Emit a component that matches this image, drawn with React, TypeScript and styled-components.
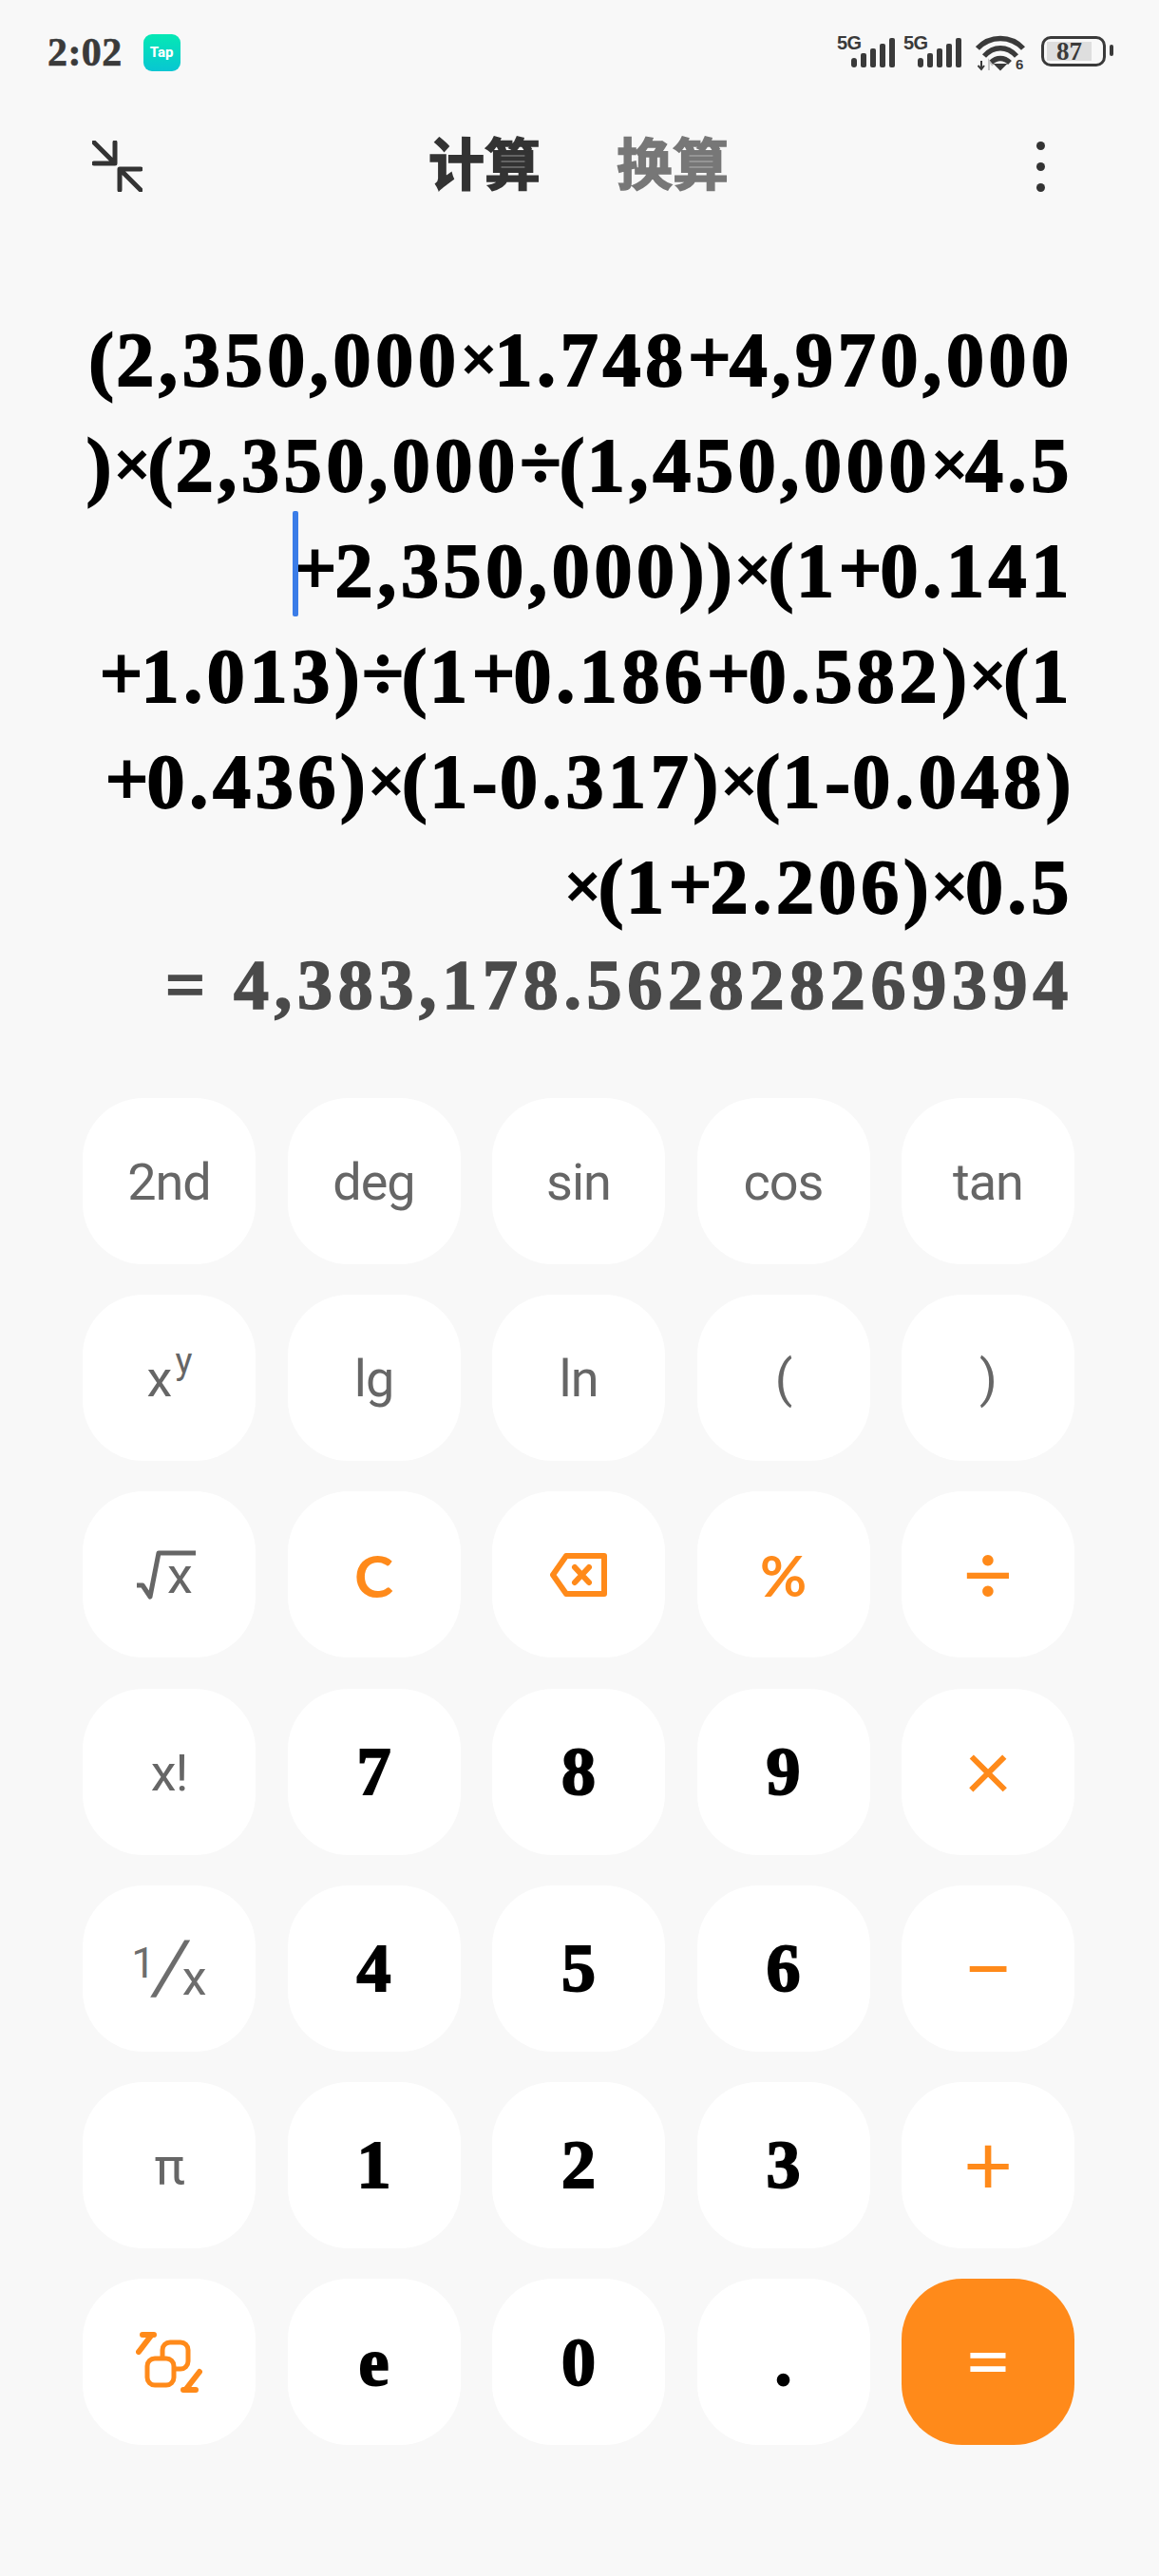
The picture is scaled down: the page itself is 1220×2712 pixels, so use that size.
import styled, { createGlobalStyle } from "styled-components";

const Global = createGlobalStyle`
    html, body {
        margin: 0;
        padding: 0;
        background: #f8f8f8;
    }
    * {
        box-sizing: border-box;
    }
`

const SERIF = `"Liberation Serif", "Noto Sans CJK SC", serif`;
const SANS = `Roboto, "Noto Sans", sans-serif`;
const ORANGE = "#ff8a1a";

const Page = styled.div`
    width: 1220px;
    height: 2712px;
    overflow: hidden;
    background: #f8f8f8;
`

const StatusBar = styled.div`
    height: 110px;
    padding: 36px 56px 0 50px;
    display: flex;
    align-items: flex-start;
`

const Time = styled.span`
    font: 700 42px/39px ${SERIF};
    color: #3a3a3a;
    letter-spacing: 0.4px;
    -webkit-text-stroke: 0.6px #3a3a3a;
`

const TapIcon = styled.div`
    width: 39px;
    height: 39px;
    margin-left: 22px;
    border-radius: 9px;
    background: linear-gradient(180deg, #05e8b4, #08c6d2);
    color: #fff;
    font: 800 15px/39px ${SANS};
    text-align: center;
`

const StatusIcons = styled.div`
    margin-left: auto;
    display: flex;
    align-items: flex-start;
`

const SignalGap = styled.span`
    width: 8px;
`

const SignalWrap = styled.div`
    position: relative;
    width: 62px;
    height: 36px;
`

const SignalLabel = styled.span`
    position: absolute;
    left: 0;
    top: 0;
    font: 700 20px/18px "Liberation Sans", sans-serif;
    letter-spacing: -0.5px;
    color: #3a3a3a;
`

const Battery = styled.div`
    width: 68px;
    height: 32px;
    margin: 2px 0 0 15px;
    padding: 3px;
    border: 3.5px solid #3a3a3a;
    border-radius: 10px;
    position: relative;

    &::after {
        content: "";
        position: absolute;
        right: -11px;
        top: 6px;
        width: 4px;
        height: 12px;
        border-radius: 2px;
        background: #3a3a3a;
    }
`

const BatteryFill = styled.div`
    width: 47px;
    height: 100%;
    background: #dedede;
    font: 700 27px/21px ${SERIF};
    color: #3a3a3a;
    padding-left: 10px;
    white-space: nowrap;
`

const Header = styled.div`
    height: 130px;
    padding: 0 120px 0 97px;
    display: flex;
    align-items: center;
`

const Tabs = styled.div`
    margin-left: 301px;
    display: flex;
    gap: 80px;
`

const Tab = styled.span<{ $active?: boolean }>`
    font: 700 59px/70px ${SERIF};
    color: ${(p) => (p.$active ? "#333" : "#777")};
    -webkit-text-stroke: 1.5px ${(p) => (p.$active ? "#333" : "#777")};
`

const Dots = styled.div`
    margin-left: auto;
    display: flex;
    flex-direction: column;
    gap: 13px;

    i {
        display: block;
        width: 9px;
        height: 9px;
        border-radius: 50%;
        background: #333;
    }
`

const Display = styled.div`
    margin-top: 84px;
    padding-right: 90px;
`

const Line = styled.div`
    height: 111px;
    display: flex;
    justify-content: flex-end;
    align-items: center;
    font: 700 80px/111px ${SERIF};
    letter-spacing: 4.7px;
    color: #000;
    -webkit-text-stroke: 1.8px #000;
    white-space: nowrap;
`

const OP_STYLES: Record<string, string> = {
    "×": "font-size: 68px; letter-spacing: -3px; vertical-align: 5px;",
    "+": "letter-spacing: -1.8px; vertical-align: 3px;",
    "÷": "letter-spacing: -2.2px; vertical-align: 3px;",
    "(": "letter-spacing: 2.5px;",
    ")": "letter-spacing: 2.5px;",
    "-": "letter-spacing: 2.5px;",
};

const Op = styled.span<{ $op: string }>`
    line-height: 1;
    ${(p) => OP_STYLES[p.$op]}
`

const Caret = styled.span`
    width: 6px;
    height: 111px;
    border-radius: 2px;
    background: #3b7de8;
    margin-right: -5px;
    transform: translateY(-8px);
`

const Result = styled.div`
    height: 90px;
    margin-top: 2px;
    text-align: right;
    font: 700 74px/90px ${SERIF};
    letter-spacing: 5.7px;
    color: #4a4a4a;
    -webkit-text-stroke: 1.6px #4a4a4a;
    white-space: nowrap;
`

const Keypad = styled.div`
    margin-top: 74px;
    padding-left: 87px;
    display: grid;
    grid-template-columns: repeat(5, 182px);
    grid-auto-rows: 175px;
    column-gap: 33.5px;
    row-gap: 32.2px;
`

const Key = styled.div<{ $primary?: boolean }>`
    border-radius: 64px;
    background: ${(p) => (p.$primary ? ORANGE : "#fff")};
    display: flex;
    align-items: center;
    justify-content: center;
`

const FnLabel = styled.span`
    font: 400 54px/1 ${SANS};
    letter-spacing: -1px;
    color: #666;
    margin-top: 3px;
`

const Sup = styled.sup`
    font-size: 38px;
    line-height: 0;
    margin-left: 4px;
    vertical-align: 24px;
`

const SqrtLabel = styled.span`
    display: flex;
    align-items: flex-end;
    font: 400 54px/1 ${SANS};
    color: #666;
    margin-left: -9px;

    span {
        margin: 0 0 -2px -30px;
    }
`

const Reciprocal = styled.span`
    font: 400 52px/1 ${SANS};
    color: #6d6d6d;
    display: flex;
    align-items: flex-end;

    b {
        font-weight: 400;
        font-size: 45px;
        margin-bottom: 22px;
    }
    em {
        display: inline-block;
        font-style: normal;
        font-size: 78px;
        font-weight: 400;
        margin: 0 -4px 0 0;
        transform: skewX(-12deg);
    }
    span {
        margin-bottom: 2px;
    }
`

const Digit = styled.span`
    font: 700 72px/1 ${SERIF};
    color: #000;
    -webkit-text-stroke: 2px #000;
`

const OpLabel = styled.span<{ $size?: number; $weight?: number; $white?: boolean; $lift?: number }>`
    font: ${(p) => p.$weight || 400} ${(p) => p.$size || 60}px/1 Lato, sans-serif;
    color: ${(p) => (p.$white ? "#fff" : ORANGE)};
    margin-bottom: ${(p) => p.$lift || 0}px;
`

function Signal() {
    return (
        <SignalWrap>
            <SignalLabel>5G</SignalLabel>
            <svg width="62" height="36" viewBox="0 0 62 36" fill="#3a3a3a">
                <rect x="15" y="25" width="6" height="10" rx="3" />
                <rect x="25" y="20" width="6" height="15" rx="2" />
                <rect x="35" y="15" width="6" height="20" rx="2" />
                <rect x="45" y="10" width="6" height="25" rx="2" />
                <rect x="55" y="4" width="6" height="31" rx="2" />
            </svg>
        </SignalWrap>
    )
}

function Wifi() {
    return (
        <svg width="54" height="40" viewBox="0 0 54 40" style={{ marginLeft: 14 }} fill="none" stroke="#3a3a3a" strokeWidth="5.5">
            <path d="M2 15 C15 1 37 1 50 15" />
            <path d="M9 23 C19 12 33 12 43 23" />
            <path d="M16 30 C22 24 30 24 36 30" />
            <path d="M21 32 L26 37 L31 32 Z" fill="#3a3a3a" strokeWidth="2" />
            <path d="M6 28 V37 M2.5 33 L6 37 L9 33" strokeWidth="2" />
            <path d="M14 38 V28 L18 33" strokeWidth="2" stroke="#c4c4c4" />
            <text x="42" y="37" fontFamily="Liberation Sans" fontWeight="700" fontSize="15" fill="#3a3a3a" stroke="none">6</text>
        </svg>
    )
}

function Collapse() {
    return (
        <svg width="53" height="54" viewBox="0 0 53 54" fill="none" stroke="#333" strokeWidth="5" strokeLinecap="round" strokeLinejoin="round">
            <path d="M2 2 L22 22 M24 2 V24 H2" />
            <path d="M51 52 L31 32 M29 52 V30 H51" />
        </svg>
    )
}

function Backspace() {
    return (
        <svg width="60" height="46" viewBox="0 0 60 46" fill="none" stroke={ORANGE} strokeWidth="6" strokeLinejoin="round">
            <path d="M17 3 H57 V43 H17 L3 23 Z" />
            <path d="M26 15 L41 31 M41 15 L26 31" strokeLinecap="round" />
        </svg>
    )
}

function Radical() {
    return (
        <svg width="62" height="52" viewBox="0 0 62 52" fill="none" stroke="#666" strokeWidth="5" strokeLinejoin="round">
            <path d="M0 37 H6 L14 49 L23 3 H62" />
        </svg>
    )
}

function SwapIcon() {
    return (
        <svg width="70" height="64" viewBox="0 0 70 64" fill="none" stroke={ORANGE} strokeWidth="5" strokeLinecap="round">
            <rect x="28" y="11" width="27" height="28" rx="8" />
            <rect x="12" y="28" width="28" height="28" rx="8" fill="#fff" />
            <path d="M3 21 L16 4 M7 3 H19" strokeWidth="6" />
            <path d="M67 42 L53 60 M50 61 H63" strokeWidth="6" />
        </svg>
    )
}

// splits on operators and brackets, those glyphs are narrower in the reference than in the serif
function Expr({ text }: { text: string }) {
    return (
        <span>
            {text.split(/([×+÷()\-])/).map((part, i) =>
                OP_STYLES[part] ? <Op key={i} $op={part}>{part}</Op> : part
            )}
        </span>
    )
}

const fnKeys = ["2nd", "deg", "sin", "cos", "tan"];
const fnKeys2 = ["lg", "ln", "(", ")"];

export default function App() {
    return (
        <Page>
            <Global />
            <StatusBar>
                <Time>2:02</Time>
                <TapIcon>Tap</TapIcon>
                <StatusIcons>
                    <Signal />
                    <SignalGap />
                    <Signal />
                    <Wifi />
                    <Battery>
                        <BatteryFill>87</BatteryFill>
                    </Battery>
                </StatusIcons>
            </StatusBar>
            <Header>
                <Collapse />
                <Tabs>
                    <Tab $active>计算</Tab>
                    <Tab>换算</Tab>
                </Tabs>
                <Dots>
                    <i />
                    <i />
                    <i />
                </Dots>
            </Header>
            <Display>
                <Line><Expr text="(2,350,000×1.748+4,970,000" /></Line>
                <Line><Expr text=")×(2,350,000÷(1,450,000×4.5" /></Line>
                <Line><Caret /><Expr text="+2,350,000))×(1+0.141" /></Line>
                <Line><Expr text="+1.013)÷(1+0.186+0.582)×(1" /></Line>
                <Line><Expr text="+0.436)×(1-0.317)×(1-0.048)" /></Line>
                <Line><Expr text="×(1+2.206)×0.5" /></Line>
                <Result>= 4,383,178.562828269394</Result>
            </Display>
            <Keypad>
                {fnKeys.map((k) => (
                    <Key key={k}><FnLabel>{k}</FnLabel></Key>
                ))}
                <Key><FnLabel>x<Sup>y</Sup></FnLabel></Key>
                {fnKeys2.map((k) => (
                    <Key key={k}><FnLabel>{k}</FnLabel></Key>
                ))}

                <Key><SqrtLabel><Radical /><span>x</span></SqrtLabel></Key>
                <Key><OpLabel $size={62} $weight={700}>C</OpLabel></Key>
                <Key><Backspace /></Key>
                <Key><OpLabel $size={60} $weight={700}>%</OpLabel></Key>
                <Key><OpLabel $size={92} $lift={6}>÷</OpLabel></Key>

                <Key><FnLabel>x!</FnLabel></Key>
                <Key><Digit>7</Digit></Key>
                <Key><Digit>8</Digit></Key>
                <Key><Digit>9</Digit></Key>
                <Key><OpLabel $size={88} $lift={6}>×</OpLabel></Key>

                <Key>
                    <Reciprocal><b>1</b><em>/</em><span>x</span></Reciprocal>
                </Key>
                <Key><Digit>4</Digit></Key>
                <Key><Digit>5</Digit></Key>
                <Key><Digit>6</Digit></Key>
                <Key><OpLabel $size={90} $lift={8}>−</OpLabel></Key>

                <Key><FnLabel>π</FnLabel></Key>
                <Key><Digit>1</Digit></Key>
                <Key><Digit>2</Digit></Key>
                <Key><Digit>3</Digit></Key>
                <Key><OpLabel $size={90} $lift={6}>+</OpLabel></Key>

                <Key><SwapIcon /></Key>
                <Key><Digit>e</Digit></Key>
                <Key><Digit>0</Digit></Key>
                <Key><Digit>.</Digit></Key>
                <Key $primary><OpLabel $size={86} $white $lift={8}>=</OpLabel></Key>
            </Keypad>
        </Page>
    )
}
